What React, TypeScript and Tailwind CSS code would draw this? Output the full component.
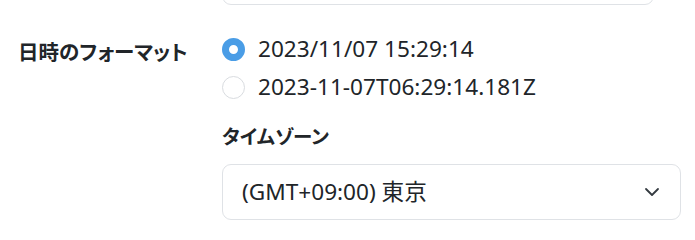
import React from "react";

const font = {
  fontFamily: '"Noto Sans", "Noto Sans CJK JP", sans-serif',
};

const cjk = {
  fontFamily: '"Noto Sans CJK JP", sans-serif',
  fontFeatureSettings: '"palt" 1',
};

function Radio({ checked }: { checked: boolean }) {
  return checked ? (
    <span className="box-border block h-[23px] w-[23px] shrink-0 rounded-full border-[7px] border-[#4a9de6] bg-white" />
  ) : (
    <span className="box-border block h-[23px] w-[23px] shrink-0 rounded-full border border-[#d9dce0] bg-white" />
  );
}

export default function App() {
  return (
    <div
      className="h-[236px] w-[695px] overflow-hidden bg-white text-[#212529]"
      style={font}
    >
      <div className="ml-[222px] mt-[-50px] h-[55px] w-[432px] rounded-[9px] border border-[#dfe2e6]" />
      <div className="mt-[25px] flex">
        <div
          className="w-[222px] pl-[18px] pt-[6px] text-[20.5px] font-bold leading-[30px] text-[#212529]"
          style={cjk}
        >
          日時のフォーマット
        </div>
        <div className="flex flex-col">
          <label className="flex h-[38px] items-center gap-[13px]">
            <Radio checked />
            <span className="text-[22.6px] leading-[30px]">2023/11/07 15:29:14</span>
          </label>
          <label className="flex h-[38px] items-center gap-[13px]">
            <Radio checked={false} />
            <span className="text-[22.6px] leading-[30px]">2023-11-07T06:29:14.181Z</span>
          </label>
          <div className="mt-[15px] text-[19.5px] font-bold leading-[30px]" style={cjk}>
            タイムゾーン
          </div>
          <div className="mt-[13px] flex h-[56px] w-[459px] items-center justify-between rounded-[9px] border border-[#dfe2e6] pl-[19px] pr-[19px]">
            <span className="text-[22.6px] leading-[30px]">(GMT+09:00) 東京</span>
            <svg
              width="18"
              height="18"
              viewBox="0 0 24 24"
              fill="none"
              stroke="#343a40"
              strokeWidth="2.4"
              strokeLinecap="round"
              strokeLinejoin="round"
            >
              <path d="m4 8 8 8 8-8" />
            </svg>
          </div>
        </div>
      </div>
    </div>
  );
}
